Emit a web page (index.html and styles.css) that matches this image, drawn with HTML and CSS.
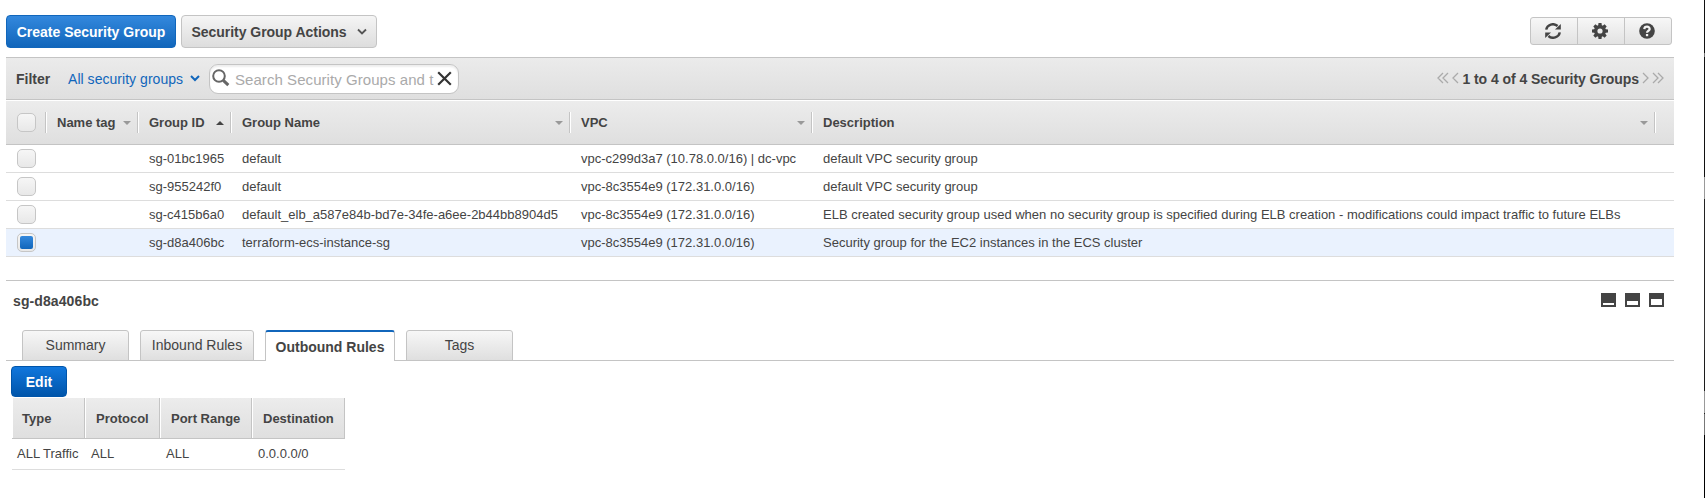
FILE: index.html
```html
<!DOCTYPE html>
<html lang="en">
<head>
<meta charset="utf-8">
<title>Security Groups</title>
<link rel="stylesheet" href="styles.css">
</head>
<body>
<div class="page">
<main class="console">
  <header class="actions">
    <button class="btn primary create">Create Security Group</button>
    <button class="btn menu">Security Group Actions
      <svg class="chev" width="10" height="8" viewBox="0 0 10 8"><path d="M1 1.5 5 5.5 9 1.5" fill="none" stroke="#555" stroke-width="1.8"/></svg>
    </button>
    <div class="tools">
      <button class="tool"><svg width="16" height="16" viewBox="0 0 16 16"><path d="M1.2 6.6A6.8 6.4 0 0 1 12.6 3" fill="none" stroke="#444" stroke-width="2.4"/><path d="M15.8.9V6.6H10z" fill="#444"/><path d="M14.8 9.4A6.8 6.4 0 0 1 3.4 13" fill="none" stroke="#444" stroke-width="2.4"/><path d="M.2 15.1V9.4H6z" fill="#444"/></svg></button>
      <button class="tool"><svg width="16" height="16" viewBox="0 0 16 16"><g fill="#444"><path d="M6.5 0h3l.5 4H6z M6.5 16h3l.5-4H6z M0 6.5v3l4 .5V6z M16 6.5v3l-4 .5V6z"/><path transform="rotate(45 8 8)" d="M6.5 0h3l.5 4H6z M6.5 16h3l.5-4H6z M0 6.5v3l4 .5V6z M16 6.5v3l-4 .5V6z"/></g><circle cx="8" cy="8" r="4.3" fill="none" stroke="#444" stroke-width="3.4"/></svg></button>
      <button class="tool"><svg width="16" height="16" viewBox="0 0 16 16"><circle cx="8" cy="8" r="7.8" fill="#444"/><path d="M5.3 6.1C5.5 2.8 10.8 2.9 10.7 6.1 10.6 7.8 8 7.8 8 9.8" fill="none" stroke="#f2f2f2" stroke-width="2.2"/><path d="M6.9 11h2.3v2.2H6.9z" fill="#f2f2f2"/></svg></button>
    </div>
  </header>

  <section class="filter">
    <strong class="label">Filter</strong>
    <a class="scope">All security groups
      <svg class="chev" width="10" height="7" viewBox="0 0 10 7"><path d="M1 1 5 5 9 1" fill="none" stroke="#1166bb" stroke-width="2"/></svg>
    </a>
    <div class="search">
      <svg class="lens" width="18" height="18" viewBox="0 0 18 18"><circle cx="7" cy="7" r="5.8" fill="none" stroke="#666" stroke-width="2"/><path d="m11.3 11.3 5 4.8" stroke="#666" stroke-width="3"/></svg>
      <span class="hint">Search Security Groups and t</span>
      <svg class="clear" width="15" height="15" viewBox="0 0 15 15"><path d="m1.2 1.2 12.6 12.6M13.8 1.2 1.2 13.8" stroke="#333" stroke-width="2.2"/></svg>
    </div>
    <div class="pager">
      <svg width="22" height="12" viewBox="0 0 22 12"><path d="M6 1 1 6l5 5M11 1 6 6l5 5M21 1l-5 5 5 5" fill="none" stroke="#aaa" stroke-width="1.3"/></svg>
      <strong class="count">1 to 4 of 4 Security Groups</strong>
      <svg width="22" height="12" viewBox="0 0 22 12"><path d="m1 1 5 5-5 5M11 1l5 5-5 5M16 1l5 5-5 5" fill="none" stroke="#aaa" stroke-width="1.3"/></svg>
    </div>
  </section>

  <section class="groups">
    <div class="row head">
      <div class="h pick"><i class="box"></i></div>
      <div class="h">Name tag<i class="tri"></i></div>
      <div class="h">Group ID<i class="tri up"></i></div>
      <div class="h">Group Name<i class="tri"></i></div>
      <div class="h">VPC<i class="tri"></i></div>
      <div class="h">Description<i class="tri"></i></div>
    </div>
    <div class="row"><div class="pick"><i class="box"></i></div><div></div><div>sg-01bc1965</div><div>default</div><div>vpc-c299d3a7 (10.78.0.0/16) | dc-vpc</div><div>default VPC security group</div></div>
    <div class="row"><div class="pick"><i class="box"></i></div><div></div><div>sg-955242f0</div><div>default</div><div>vpc-8c3554e9 (172.31.0.0/16)</div><div>default VPC security group</div></div>
    <div class="row"><div class="pick"><i class="box"></i></div><div></div><div>sg-c415b6a0</div><div>default_elb_a587e84b-bd7e-34fe-a6ee-2b44bb8904d5</div><div>vpc-8c3554e9 (172.31.0.0/16)</div><div>ELB created security group used when no security group is specified during ELB creation - modifications could impact traffic to future ELBs</div></div>
    <div class="row selected"><div class="pick"><i class="box on"></i></div><div></div><div>sg-d8a406bc</div><div>terraform-ecs-instance-sg</div><div>vpc-8c3554e9 (172.31.0.0/16)</div><div>Security group for the EC2 instances in the ECS cluster</div></div>
  </section>

  <section class="detail">
    <div class="title">
      <strong class="group-id">sg-d8a406bc</strong>
      <div class="panes"><i class="pane low"></i><i class="pane mid"></i><i class="pane high"></i></div>
    </div>
    <nav class="tabs">
      <a class="tab summary">Summary</a>
      <a class="tab inbound">Inbound Rules</a>
      <a class="tab outbound active">Outbound Rules</a>
      <a class="tab tags">Tags</a>
    </nav>
    <button class="btn primary edit">Edit</button>
    <div class="rules">
      <div class="rh">Type</div><div class="rh">Protocol</div><div class="rh">Port Range</div><div class="rh">Destination</div>
      <div class="rd">ALL Traffic</div><div class="rd">ALL</div><div class="rd">ALL</div><div class="rd">0.0.0.0/0</div>
    </div>
  </section>
</main>
<div class="edge"></div>
</div>
</body>
</html>
```
FILE: styles.css
```css
* { box-sizing: border-box; }
body { margin: 0; background: #fff; color: #444; font: 13px/16px "Liberation Sans", Arial, sans-serif; overflow: hidden; }
.page { display: flex; justify-content: space-between; height: 498px; padding-left: 6px; }
.console { width: 1668px; }
.edge { width: 1px; background: linear-gradient(#111 0 53px, #777 53px 57px, #111 57px 177px, #999 177px 199px, #222 199px 310px, #333 310px 350px, #1c1c1c 350px 391px, #999 391px 413px, #222 413px 414px, #777 414px 435px, #000 435px); }

.actions { display: flex; align-items: flex-start; height: 57px; padding-top: 15px; }
.btn { display: flex; align-items: center; justify-content: center; height: 33px; padding: 0; border: 1px solid #c4c4c4; border-radius: 4px; background: linear-gradient(#f5f5f5, #ddd); color: #444; font: bold 14px/16px "Liberation Sans", Arial, sans-serif; white-space: nowrap; }
.primary { border-color: #1166bb; background: linear-gradient(#3388dd, #1166bb); color: #fff; }
.create { width: 170px; margin-right: 5px; }
.menu { width: 196px; gap: 10px; letter-spacing: -0.03px; }
.tools { display: flex; width: 142px; height: 28px; margin: 2px 2px 0 auto; border: 1px solid #c4c4c4; border-radius: 3px; background: linear-gradient(#f7f7f7, #e2e2e2); }
.tool { display: flex; flex: 1; align-items: center; justify-content: center; padding: 0 2px 0 0; border: 0; border-left: 1px solid #c4c4c4; background: none; }
.tool:first-child { border-left: 0; }

.filter { display: flex; align-items: center; height: 43px; padding: 0 10px 0 10px; border-top: 1px solid #c4c4c4; border-bottom: 1px solid #c4c4c4; background: linear-gradient(#ebebeb, #dfdfdf); font-size: 14px; }
.label { width: 52px; }
.scope { display: flex; align-items: center; gap: 7px; width: 141px; color: #1166bb; letter-spacing: 0.04px; white-space: nowrap; }
.search { display: flex; align-items: center; width: 250px; height: 30px; padding-left: 2px; border: 1px solid #c4c4c4; border-radius: 9px; background: #fff; box-shadow: inset 0 2px 2px #eee; }
.lens { margin-top: -1px; }
.hint { width: 200px; margin: 2px 2px 0 5px; color: #aaa; font-size: 15px; letter-spacing: 0.06px; white-space: nowrap; }
.pager { display: flex; align-items: center; gap: 3px; margin-left: auto; white-space: nowrap; }
.count { letter-spacing: -0.06px; }
.pager svg { margin-top: -2px; }

.groups { margin-top: 1px; }
.row { display: grid; grid-template-columns: 40px 92px 93px 339px 242px 1fr; align-items: center; height: 28px; border-bottom: 1px solid #ddd; white-space: nowrap; }
.row > div { padding-left: 11px; }
.head { grid-template-columns: 40px 92px 93px 339px 242px 843px; height: 44px; border-color: #c4c4c4; background: linear-gradient(#ececec, #dfdfdf); font-weight: bold; }
.h { display: flex; align-items: center; justify-content: space-between; height: 21px; padding-right: 6px; border-right: 1px solid #c4c4c4; box-shadow: 1px 0 #fff; }
.box { display: flex; width: 19px; height: 19px; border: 1px solid #c6c6c6; border-radius: 5px; background: linear-gradient(#f6f6f6, #e8e8e8); }
.on::after { content: ""; width: 13px; height: 13px; margin: auto; border-radius: 2px; background: linear-gradient(#3388dd, #1166bb); }
.selected { background: #eaf2fe; }
.tri { border: solid transparent; border-width: 4px 4px 0; border-top-color: #999; }
.up { border-width: 0 4px 4px; border-bottom-color: #444; }

.detail { margin-top: 23px; border-top: 1px solid #c4c4c4; }
.title { display: flex; align-items: flex-start; justify-content: space-between; height: 49px; padding: 12px 10px 0 7px; font-size: 14px; }
.group-id { letter-spacing: 0.1px; }
.panes { display: flex; gap: 9px; }
.pane { width: 15px; height: 14px; border: solid #444; border-width: 10px 2px 2px; background: #fff; }
.mid { border-top-width: 8px; }
.high { border-top-width: 6px; }
.tabs { display: flex; gap: 11px; height: 31px; padding-left: 16px; box-shadow: inset 0 -1px #c4c4c4; font-size: 14px; }
.tab { display: flex; align-items: center; justify-content: center; height: 31px; padding-bottom: 2px; border: 1px solid #c4c4c4; border-radius: 3px 3px 0 0; background: linear-gradient(#f7f7f7, #dfdfdf); white-space: nowrap; }
.summary { width: 107px; }
.inbound { width: 114px; }
.outbound { width: 130px; }
.tags { width: 107px; }
.active { padding: 1px 0 0; border-top: 2px solid #1166bb; border-bottom: 0; background: #fff; font-weight: bold; }
.edit { width: 56px; height: 31px; margin: 5px 0 1px 5px; border-color: #0055aa; background: linear-gradient(#1177dd, #0055aa); }
.rules { display: grid; grid-template-columns: 73px 75px 92px 93px; width: 334px; margin-left: 5px; border-left: 1px solid #fff; }
.rh { height: 41px; padding: 13px 0 0 11px; border: solid #c4c4c4; border-width: 0 1px 1px 0; background: linear-gradient(#ececec, #dfdfdf); box-shadow: inset 1px 0 #fff; font-weight: bold; }
.rd { height: 31px; padding: 7px 0 0 6px; border-bottom: 1px solid #ddd; white-space: nowrap; }
.rh:first-child { padding-left: 10px; }
.rd:nth-child(5) { padding-left: 5px; }
```
